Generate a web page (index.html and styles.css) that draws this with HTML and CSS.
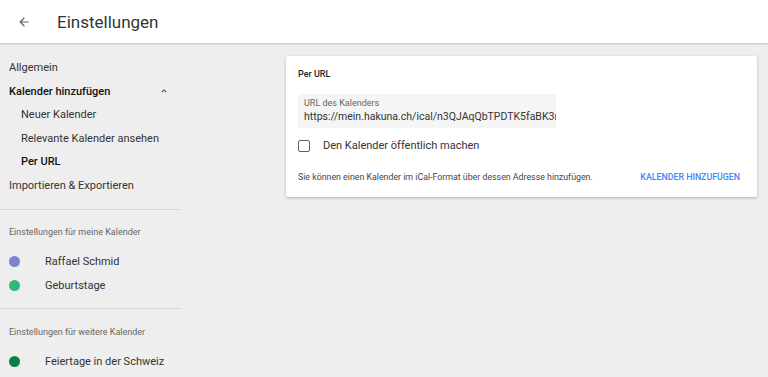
FILE: index.html
```html
<html>

<head>
    <link rel="stylesheet" href="styles.css">
</head>

<body>
    <div class="header">
        <svg class="header__back" width="14" height="14" viewBox="0 0 24 24">
            <path d="M20 11H7.83l5.59-5.59L12 4l-8 8 8 8 1.41-1.41L7.83 13H20v-2z" fill="#5f6368"/>
        </svg>
        <div class="header__title">Einstellungen</div>
    </div>

    <div class="main">
        <div class="sidebar">
            <div class="nav">
                <div class="nav__item">Allgemein</div>
                <div class="nav__item nav__item--open">
                    <span>Kalender hinzufügen</span>
                    <svg width="10" height="10" viewBox="0 0 24 24">
                        <path d="M7.41 15.41L12 10.83l4.59 4.58L18 14l-6-6-6 6z" fill="#333"/>
                    </svg>
                </div>
                <div class="nav__item nav__item--sub">Neuer Kalender</div>
                <div class="nav__item nav__item--sub">Relevante Kalender ansehen</div>
                <div class="nav__item nav__item--sub nav__item--active">Per URL</div>
                <div class="nav__item">Importieren &amp; Exportieren</div>
            </div>

            <div class="section">
                <div class="section__title">Einstellungen für meine Kalender</div>
                <div class="cal"><span class="cal__dot cal__dot--blue"></span>Raffael Schmid</div>
                <div class="cal"><span class="cal__dot cal__dot--green"></span>Geburtstage</div>
            </div>

            <div class="section">
                <div class="section__title">Einstellungen für weitere Kalender</div>
                <div class="cal"><span class="cal__dot cal__dot--dark"></span>Feiertage in der Schweiz</div>
            </div>
        </div>

        <div class="content">
            <div class="card">
                <div class="card__title">Per URL</div>
                <div class="field">
                    <div class="field__label">URL des Kalenders</div>
                    <div class="field__value">https://mein.hakuna.ch/ical/n3QJAqQbTPDTK5faBK3r</div>
                </div>
                <label class="check">
                    <span class="check__box"></span>
                    Den Kalender öffentlich machen
                </label>
                <div class="card__footer">
                    <span class="card__hint">Sie können einen Kalender im iCal-Format über dessen Adresse hinzufügen.</span>
                    <span class="card__button">KALENDER HINZUFÜGEN</span>
                </div>
            </div>
        </div>
    </div>
</body>

</html>
```

FILE: styles.css
```css
body {
    margin: 0;
    background-color: #eeeeee;
    font-family: Roboto, "Liberation Sans", sans-serif;
    color: #212121;
}

.header {
    display: flex;
    align-items: center;
    height: 43px;
    background-color: #fff;
    border-bottom: 1px solid #cfcfcf;
    box-shadow: 0 1px 1px rgba(0, 0, 0, 0.06);
}

.header__back {
    margin-left: 17px;
}

.header__title {
    margin-left: 26px;
    font-size: 17px;
    color: #333;
}

.main {
    display: flex;
}

/* left navigation */
.sidebar {
    width: 180px;
    flex-shrink: 0;
}

.nav {
    padding: 12px 0 12px;
    border-bottom: 1px solid #d6d6d6;
}

.nav__item {
    display: flex;
    align-items: center;
    justify-content: space-between;
    height: 23.5px;
    padding: 0 11px 0 9px;
    font-size: 11px;
    color: #333;
}

.nav__item--open {
    color: #111;
    font-weight: 500;
}

.nav__item--sub {
    padding-left: 21px;
}

.nav__item--active {
    color: #111;
    font-weight: 500;
}

.section {
    padding: 17px 0 11px;
    border-bottom: 1px solid #d6d6d6;
}

.section + .section {
    padding-top: 18px;
}

.section:last-child {
    border-bottom: none;
}

.section__title {
    padding-left: 9px;
    font-size: 9px;
    color: #666;
    margin-bottom: 12px;
}

.cal {
    display: flex;
    align-items: center;
    height: 24px;
    padding-left: 9px;
    font-size: 11px;
    color: #333;
}

.cal__dot {
    width: 11px;
    height: 11px;
    border-radius: 50%;
    margin-right: 25px;
}

.cal__dot--blue {
    background-color: #7986cb;
}

.cal__dot--green {
    background-color: #33b679;
}

.cal__dot--dark {
    background-color: #0b8043;
}

/* right side */
.content {
    padding: 12px 0 0 106px;
}

.card {
    width: 447px;
    padding: 13px 12px 15px;
    background-color: #fff;
    border-radius: 2px;
    box-shadow: 0 1px 3px rgba(0, 0, 0, 0.25);
}

.card__title {
    font-size: 9px;
    font-weight: 500;
    color: #222;
    margin-bottom: 15px;
}

.field {
    width: 258px;
    height: 34px;
    padding: 4px 0 0 6px;
    box-sizing: border-box;
    background-color: #f5f5f5;
    overflow: hidden;
}

.field__label {
    font-size: 9px;
    color: #666;
}

.field__value {
    font-size: 10.5px;
    color: #333;
    white-space: nowrap;
    margin-top: 2px;
}

.check {
    display: flex;
    align-items: center;
    margin-top: 11px;
    font-size: 11px;
    color: #333;
}

.check__box {
    width: 10px;
    height: 10px;
    border: 1.5px solid #5f6368;
    border-radius: 2px;
    margin-right: 13px;
}

.card__footer {
    display: flex;
    justify-content: space-between;
    align-items: center;
    margin-top: 20px;
    padding-right: 5px;
}

.card__hint {
    font-size: 8.8px;
    color: #444;
}

.card__button {
    font-size: 8.8px;
    font-weight: 500;
    color: #4285f4;
}
```
